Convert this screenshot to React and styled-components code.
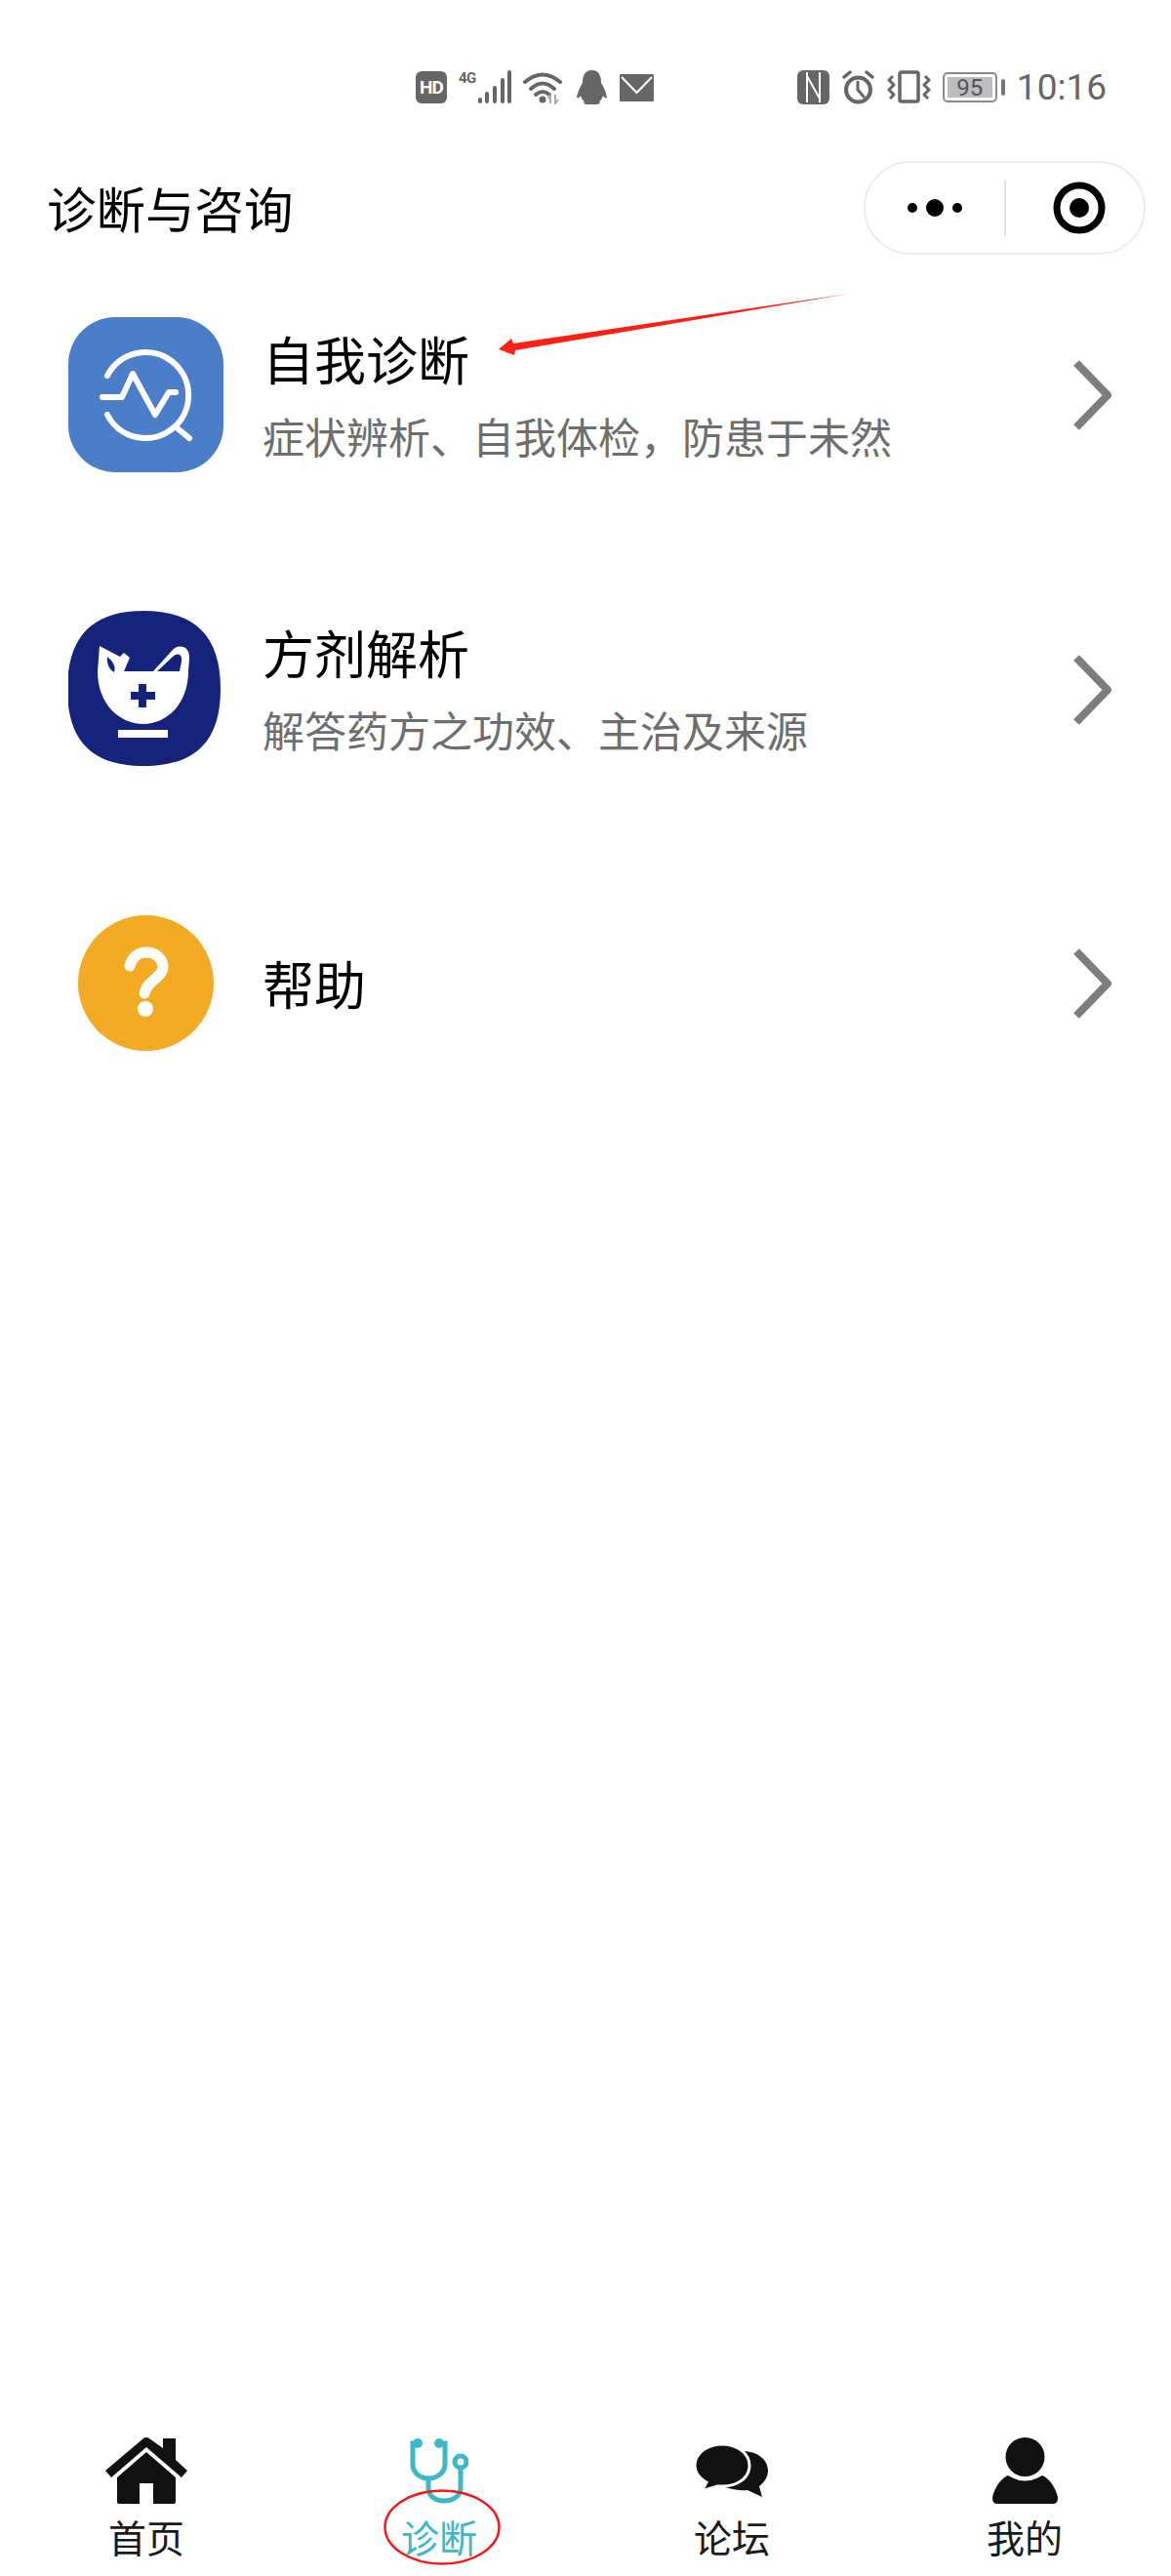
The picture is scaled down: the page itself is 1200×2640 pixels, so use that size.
import styled, { createGlobalStyle } from "styled-components"

const GlobalStyle = createGlobalStyle`
    html, body {
        margin: 0;
        padding: 0;
        background: #fff;
    }
    * {
        box-sizing: border-box;
    }
`

const Page = styled.div`
    position: relative;
    display: flex;
    flex-direction: column;
    width: 1200px;
    height: 2640px;
    overflow: hidden;
    background: #fff;
    font-family: "Noto Sans CJK SC", "Noto Sans", sans-serif;
`

const StatusBar = styled.div`
    display: flex;
    justify-content: space-between;
    align-items: flex-start;
    height: 165px;
    padding: 72px 66px 0 426px;
`
const StatusGroup = styled.div`
    display: flex;
    align-items: center;
    gap: ${({ $gap }) => $gap}px;
    height: 35px;
`
const HdBadge = styled.span`
    display: flex;
    align-items: center;
    justify-content: center;
    width: 32px;
    height: 33px;
    border-radius: 6px;
    background: #666;
    color: #fff;
    font: bold 19px/1 "Roboto", sans-serif;
    letter-spacing: -1px;
`
const Signal = styled.div`
    display: flex;
    align-items: flex-start;
    height: 35px;
`
const NetworkType = styled.span`
    width: 20px;
    color: #666;
    font: bold 15px/17px "Roboto", sans-serif;
    letter-spacing: -0.5px;
`
const Battery = styled.div`
    display: flex;
    align-items: center;
    gap: 4px;
`
const BatteryBody = styled.div`
    width: 56px;
    height: 31px;
    padding: 3px;
    border: 2px solid #8a8a8a;
    border-radius: 5px;
`
const BatteryFill = styled.div`
    display: flex;
    align-items: center;
    justify-content: center;
    height: 100%;
    background: #bdbdbd;
    color: #555;
    font: 24px/1 "Roboto", sans-serif;
`
const BatteryNub = styled.div`
    width: 4px;
    height: 17px;
    border-radius: 2px;
    background: #777;
`
const Clock = styled.span`
    color: #666;
    font: 37px/35px "Roboto", sans-serif;
`

const Header = styled.div`
    display: flex;
    justify-content: space-between;
    align-items: center;
    height: 96px;
    padding: 0 26px 0 48px;
`
const PageTitle = styled.h1`
    margin: -2px 0 0;
    color: #000;
    font-size: 50.5px;
    font-weight: 400;
    line-height: 1;
`
const Capsule = styled.div`
    display: flex;
    align-items: center;
    width: 289px;
    height: 96px;
    border: 2px solid #ececec;
    border-radius: 48px;
`
const CapsulePart = styled.div`
    display: flex;
    justify-content: center;
    align-items: center;
    flex: none;
    width: ${({ $width }) => $width}px;
    padding-left: ${({ $shift }) => $shift || 0}px;
`
const CapsuleLine = styled.div`
    flex: none;
    width: 2px;
    height: 57px;
    background: #e2e2e2;
`

const MenuList = styled.div`
    display: flex;
    flex-direction: column;
    gap: 15.5px;
    flex: 1;
`
const MenuRow = styled.div`
    display: flex;
    align-items: center;
    height: 286px;
    padding: 0 60px 0 70px;
`
const IconSlot = styled.div`
    display: flex;
    justify-content: center;
    align-items: center;
    flex: none;
    width: 159px;
    height: 159px;
`
const MenuText = styled.div`
    display: flex;
    flex-direction: column;
    flex: 1;
    gap: 15px;
    margin-left: 40px;
`
const MenuTitle = styled.div`
    color: #000;
    font-size: 53px;
    line-height: 68px;
`
const MenuDesc = styled.div`
    color: #6e6e6e;
    font-size: 43px;
    line-height: 60px;
`
const Chevron = styled.svg`
    flex: none;
    margin-top: 2px;
`

const TabBar = styled.div`
    display: grid;
    grid-template-columns: repeat(4, 300px);
    padding-bottom: 17px;
`
const Tab = styled.div`
    position: relative;
    display: flex;
    flex-direction: column;
    align-items: center;
    gap: 9px;
    color: ${({ $active }) => ($active ? "#3cb8c6" : "#1a1a1a")};
`
const TabIcon = styled.div`
    display: flex;
    align-items: center;
    justify-content: center;
    height: 68px;
`
const TabLabel = styled.span`
    font-size: 39px;
    line-height: 48px;
`
const CircleMark = styled.svg`
    position: absolute;
    left: 93px;
    top: 53px;
`
const ArrowMark = styled.svg`
    position: absolute;
    left: 505px;
    top: 295px;
`

const SignalBars = () => (
    <svg width="34" height="35" viewBox="0 0 34 35">
        <g fill="#666">
            <rect x="0" y="28" width="4" height="6" rx="2" />
            <rect x="7" y="22" width="4" height="12" rx="2" />
            <rect x="15" y="16" width="4" height="18" rx="2" />
            <rect x="23" y="8" width="4" height="26" rx="2" />
            <rect x="30" y="0" width="4" height="34" rx="2" />
        </g>
    </svg>
)

const WifiIcon = () => (
    <svg width="42" height="35" viewBox="0 0 42 35">
        <g fill="none" stroke="#666" strokeWidth="4" strokeLinecap="round">
            <path d="M2 12 Q20 -3 38 12" />
            <path d="M8 19 Q20 8 32 19" />
            <path d="M13 25 Q20 19 27 25" />
        </g>
        <circle cx="20" cy="30" r="3.5" fill="#666" />
        <path d="M28 34 L28 25 L26 29 M33 25 L33 34 L36 30" fill="none" stroke="#aaa" strokeWidth="2" />
    </svg>
)

const PenguinIcon = () => (
    <svg width="33" height="35" viewBox="0 0 33 35">
        <path d="M16.5 0 C8 0 7 8 7 13 C4 18 2 22 1 28 C2 29 4 28 5 26 C6 29 7 31 9 32 C7 33 9 35 12 35 L21 35 C24 35 26 33 24 32 C26 31 27 29 28 26 C29 28 31 29 32 28 C31 22 29 18 26 13 C26 8 25 0 16.5 0 Z" fill="#666" />
    </svg>
)

const MailIcon = () => (
    <svg width="35" height="28" viewBox="0 0 35 28">
        <rect width="35" height="28" rx="1" fill="#666" />
        <path d="M2 3 L17.5 19 L33 3" fill="none" stroke="#fff" strokeWidth="2" />
    </svg>
)

const NfcIcon = () => (
    <svg width="33" height="35" viewBox="0 0 33 35">
        <rect width="33" height="35" rx="6" fill="#666" />
        <path d="M10 2 L10 33 M10 6 L23 29 M23 2 L23 33" fill="none" stroke="#fff" strokeWidth="2" />
    </svg>
)

const AlarmIcon = () => (
    <svg width="35" height="35" viewBox="0 0 35 35">
        <g fill="none" stroke="#666" strokeLinecap="round">
            <circle cx="17.5" cy="20" r="12.5" strokeWidth="4" />
            <path d="M17 12 L17 20 L23 27" strokeWidth="3" />
            <path d="M3 7 L9 2 M32 7 L26 2" strokeWidth="3.5" />
        </g>
    </svg>
)

const VibrateIcon = () => (
    <svg width="45" height="35" viewBox="0 0 45 35">
        <g fill="none" stroke="#666" strokeLinejoin="round">
            <rect x="13" y="2" width="19" height="30" rx="2" strokeWidth="3.5" />
            <path d="M6 6 L2 10 L7 15 L2 20 L7 25 L3 29" strokeWidth="3" />
            <path d="M39 6 L43 10 L38 15 L43 20 L38 25 L42 29" strokeWidth="3" />
        </g>
    </svg>
)

const DotsIcon = () => (
    <svg width="56" height="20" viewBox="0 0 56 20">
        <circle cx="5" cy="10" r="5" />
        <circle cx="28" cy="10" r="9" />
        <circle cx="51" cy="10" r="5" />
    </svg>
)

const TargetIcon = () => (
    <svg width="54" height="54" viewBox="0 0 54 54">
        <circle cx="27" cy="27" r="23" fill="none" stroke="#000" strokeWidth="7" />
        <circle cx="27" cy="27" r="10" />
    </svg>
)

const ChevronIcon = () => (
    <Chevron width="40" height="72" viewBox="0 0 40 72">
        <path d="M3 3 L35 36 L3 69" fill="none" stroke="#7d7d7d" strokeWidth="8" strokeLinejoin="round" />
    </Chevron>
)

const DiagnoseIcon = () => (
    <svg width="159" height="159" viewBox="0 0 159 159">
        <rect width="159" height="159" rx="48" fill="#4b7ec9" />
        <g fill="none" stroke="#fff" strokeWidth="6" strokeLinecap="round" strokeLinejoin="round">
            <path d="M40 60 A44 44 0 1 1 40 100" />
            <path d="M35 82 L55 82 L66 58 L89 100 L103 77 L110 77" />
            <path d="M113 115 L124 124" />
        </g>
    </svg>
)

const MortarIcon = () => (
    <svg width="159" height="159" viewBox="1 0 159 159">
        <path d="M78 0 C130 0 157 25 157 80 C157 135 130 159 78 159 C27 159 0 135 0 80 C0 25 27 0 78 0 Z" fill="#15247a" />
        <path d="M31 62 L33 36 L54 47 L58 43 L64 48 L58 62 L88 62 L107 41 C114 33 126 36 125 49 L124 62 C124 95 102 116 78 116 C53 116 31 95 31 62 Z" fill="#fff" />
        <path d="M41 47 C47 52 50 57 48 63 C43 60 40 54 41 47 Z M92 62 L108 47 C114 42 118 45 117 52 L115 62 Z" fill="#15247a" />
        <path d="M73 75 H81 V83 H90 V91 H81 V99 H73 V91 H65 V83 H73 Z" fill="#15247a" />
        <rect x="52" y="122" width="51" height="8" fill="#fff" />
    </svg>
)

const HelpIcon = () => (
    <svg width="139" height="139" viewBox="0 0 139 139">
        <circle cx="69.5" cy="69.5" r="69.5" fill="#f3ab26" />
        <path d="M53 52 C55 43 62 38 70 38 C80 38 87 45 87 53 C87 64 70 67 68 80" fill="none" stroke="#fff" strokeWidth="11" strokeLinecap="round" />
        <circle cx="69" cy="96" r="8" fill="#fff" />
    </svg>
)

const HomeIcon = () => (
    <svg width="84" height="68" viewBox="0 0 84 68">
        <path d="M39 1 Q42 -1 45 1 L59 11 L59 1 L72 1 L72 23 L84 34 L78 41 L42 10 L6 41 L0 34 Z M42 15 L72 41 L72 66 Q72 68 70 68 L49 68 L49 47 L35 47 L35 68 L14 68 Q12 68 12 66 L12 41 Z" fill="#111" />
    </svg>
)

const StethoscopeIcon = () => (
    <svg width="60" height="68" viewBox="0 0 60 68">
        <g fill="none" stroke="#3cb8c6" strokeWidth="5" strokeLinecap="round">
            <path d="M8 6 L3 6 L3 27 C3 36 10 42 19 42 C28 42 36 36 36 27 L36 6 L30 6" />
            <path d="M19 42 L19 52 C19 60 26 65 35 65 C44 65 52 60 52 52 L52 33" />
            <circle cx="52" cy="25" r="6" />
        </g>
        <circle cx="8" cy="6" r="5" fill="#3cb8c6" />
        <circle cx="30" cy="6" r="5" fill="#3cb8c6" />
    </svg>
)

const ChatIcon = () => (
    <svg width="74" height="54" viewBox="0 0 74 54">
        <path d="M50 7 C63 8 74 15 74 27 C74 34 70 39 65 43 L68 54 L53 47 C45 48 38 46 30 44 Z" fill="#111" />
        <path d="M27 0 C42 0 55 9 55 22 C55 35 42 43 27 43 L22 43 L6 48 L11 39 C4 35 -1 29 -1 22 C-1 9 12 0 27 0 Z" fill="#111" stroke="#fff" strokeWidth="3" />
    </svg>
)

const UserIcon = () => (
    <svg width="67" height="68" viewBox="0 0 67 68">
        <circle cx="33.5" cy="20" r="20" fill="#111" />
        <path d="M16 39 Q33.5 50 51 39 C59 42 66 54 67 62 Q67 68 62 68 L5 68 Q0 68 0 62 C1 54 8 42 16 39 Z" fill="#111" />
    </svg>
)

const menuItems = [
    { title: "自我诊断", desc: "症状辨析、自我体检，防患于未然", icon: <DiagnoseIcon /> },
    { title: "方剂解析", desc: "解答药方之功效、主治及来源", icon: <MortarIcon /> },
    { title: "帮助", icon: <HelpIcon /> },
]

const tabs = [
    { label: "首页", icon: <HomeIcon /> },
    { label: "诊断", icon: <StethoscopeIcon />, active: true },
    { label: "论坛", icon: <ChatIcon /> },
    { label: "我的", icon: <UserIcon /> },
]

const App = () => {
    return (
        <Page>
            <GlobalStyle />
            <StatusBar>
                <StatusGroup $gap={12}>
                    <HdBadge>HD</HdBadge>
                    <Signal>
                        <NetworkType>4G</NetworkType>
                        <SignalBars />
                    </Signal>
                    <WifiIcon />
                    <PenguinIcon />
                    <MailIcon />
                </StatusGroup>
                <StatusGroup $gap={12}>
                    <NfcIcon />
                    <AlarmIcon />
                    <VibrateIcon />
                    <Battery>
                        <BatteryBody>
                            <BatteryFill>95</BatteryFill>
                        </BatteryBody>
                        <BatteryNub />
                    </Battery>
                    <Clock>10:16</Clock>
                </StatusGroup>
            </StatusBar>
            <Header>
                <PageTitle>诊断与咨询</PageTitle>
                <Capsule>
                    <CapsulePart $width={142}>
                        <DotsIcon />
                    </CapsulePart>
                    <CapsuleLine />
                    <CapsulePart $width={141} $shift={9}>
                        <TargetIcon />
                    </CapsulePart>
                </Capsule>
            </Header>
            <MenuList>
                {menuItems.map((item) => (
                    <MenuRow key={item.title}>
                        <IconSlot>{item.icon}</IconSlot>
                        <MenuText>
                            <MenuTitle>{item.title}</MenuTitle>
                            {item.desc && <MenuDesc>{item.desc}</MenuDesc>}
                        </MenuText>
                        <ChevronIcon />
                    </MenuRow>
                ))}
            </MenuList>
            <TabBar>
                {tabs.map((tab) => (
                    <Tab key={tab.label} $active={tab.active}>
                        <TabIcon>{tab.icon}</TabIcon>
                        <TabLabel>{tab.label}</TabLabel>
                        {tab.active && (
                            <CircleMark width="120" height="78" viewBox="0 0 120 78">
                                <ellipse cx="60" cy="39" rx="58.5" ry="37.5" fill="none" stroke="#f5191a" strokeWidth="2.5" />
                            </CircleMark>
                        )}
                    </Tab>
                ))}
            </TabBar>
            <ArrowMark width="370" height="75" viewBox="0 0 370 75">
                <polygon points="365,6 21,57 19,52 6,63 22,69 23,64" fill="#ff2015" />
            </ArrowMark>
        </Page>
    )
}

export default App
